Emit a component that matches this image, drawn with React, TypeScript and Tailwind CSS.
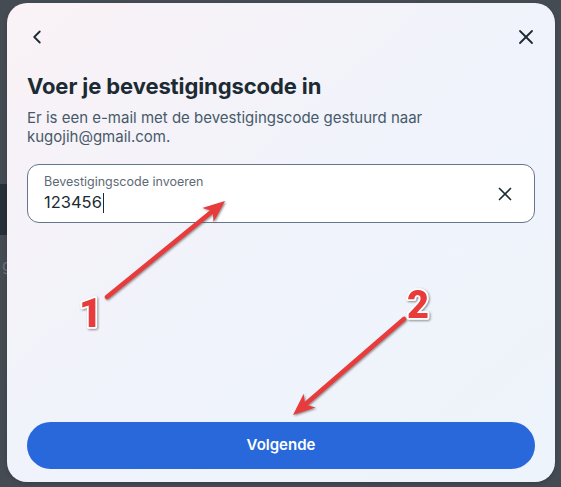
import { ChevronLeft, X } from "lucide-react";

const font = { fontFamily: "Inter, 'Noto Sans', sans-serif" };

function Annotations() {
  return (
    <svg className="pointer-events-none absolute inset-0" width={561} height={487} viewBox="0 0 561 487">
      <defs>
        <filter id="sh" x="-20%" y="-20%" width="140%" height="140%">
          <feDropShadow dx="1" dy="1" stdDeviation="0.8" floodColor="#555" floodOpacity="0.7" />
        </filter>
      </defs>
      <g filter="url(#sh)">
        <line x1={107} y1={297} x2={212.6} y2={211.1} stroke="#e83a3a" strokeWidth={4.5} strokeLinecap="round" />
        <polygon points="225,201 213.6,221.9 212.6,211.1 202.2,207.9" fill="#e83a3a" />
        <line x1={404} y1={319} x2={305.1} y2={404.5} stroke="#e83a3a" strokeWidth={4.5} strokeLinecap="round" />
        <polygon points="293,415 315.5,407.4 305.1,404.5 303.7,393.8" fill="#e83a3a" />
        <text
          x={79}
          y={327}
          fontSize={40}
          fontWeight={900}
          fontFamily="Roboto, 'Liberation Sans', sans-serif"
          fill="#e83a3a"
          stroke="#fff"
          strokeWidth={3.5}
          strokeLinejoin="round"
          style={{ paintOrder: "stroke" }}
        >
          1
        </text>
        <text
          x={407}
          y={318}
          fontSize={38}
          fontWeight={900}
          fontFamily="Roboto, 'Liberation Sans', sans-serif"
          fill="#e83a3a"
          stroke="#fff"
          strokeWidth={3.5}
          strokeLinejoin="round"
          style={{ paintOrder: "stroke" }}
        >
          2
        </text>
      </g>
    </svg>
  );
}

export default function App() {
  return (
    <div className="relative h-[487px] w-[561px] overflow-hidden bg-[#454b52]" style={font}>
      {/* dimmed page behind the dialog */}
      <div className="flex flex-col pt-[184px]">
        <div className="h-[51px] w-[40px] bg-[#26303a]" />
        <div className="mt-[18px] pl-[2px] text-[16px] text-[#6b7278]">g</div>
      </div>

      <div className="absolute left-[7px] top-[3px] flex h-[479px] w-[548px] flex-col rounded-[20px] bg-gradient-to-br from-[#faf2f6] via-[#f0f3fb] to-[#eef4fb] px-[20px] pb-[13px] pt-[22px] shadow-[0_2px_4px_rgba(0,0,0,0.15)]">
        <div className="flex items-center justify-between">
          <ChevronLeft className="h-[22px] w-[22px] -ml-[1px] text-[#1c2b33]" strokeWidth={2} />
          <X className="h-[24px] w-[24px] -mr-[3px] text-[#1c2b33]" strokeWidth={1.8} />
        </div>

        <h1 className="mt-[23px] text-[22px] font-bold leading-[28px] tracking-[-0.1px] text-[#1c2b33]">
          Voer je bevestigingscode in
        </h1>
        <p className="mt-[8px] text-[15px] leading-[19px] text-[#465a69]">
          Er is een e-mail met de bevestigingscode gestuurd naar
          <br />
          kugojih@gmail.com.
        </p>

        <div className="mt-[18px] flex h-[59px] items-center rounded-[12px] border border-[#66768a] bg-white pl-[16px] pr-[18px]">
          <div className="flex flex-1 flex-col">
            <span className="text-[12.5px] leading-[16px] text-[#5d6a75]">Bevestigingscode invoeren</span>
            <span className="mt-[2px] flex items-center text-[16.5px] leading-[21px] text-[#1c2b33]">
              123456
              <span className="ml-[1px] inline-block h-[20px] w-[1px] bg-[#1c2b33]" />
            </span>
          </div>
          <X className="h-[22px] w-[22px] text-[#1c2b33]" strokeWidth={1.8} />
        </div>

        <div className="flex-1" />

        <button className="h-[47px] w-full rounded-full bg-[#2968db] text-[15px] font-semibold text-white">
          Volgende
        </button>
      </div>

      <Annotations />
    </div>
  );
}
